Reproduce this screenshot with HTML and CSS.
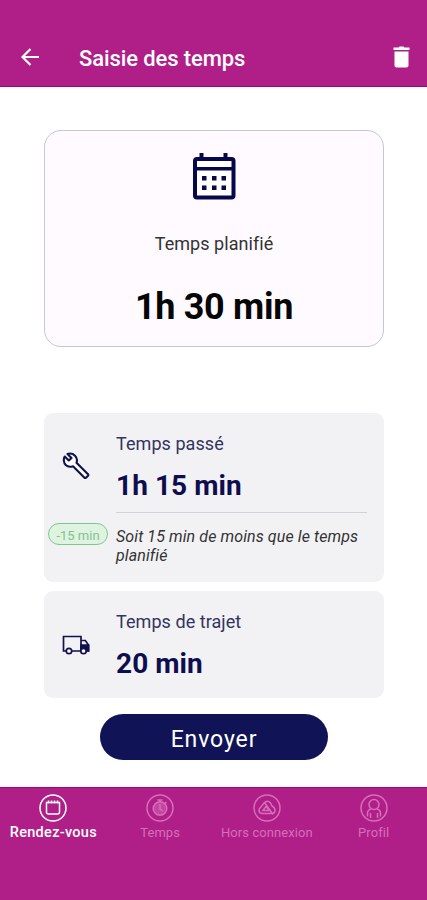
FILE: index.html
```
<!DOCTYPE html>
<html lang="fr">
<head>
    <title>Saisie des temps</title>
    <meta charset="UTF-8">
    <meta name="viewport" content="width=device-width, initial-scale=1">
    <link rel="stylesheet" href="styles.css">
</head>
<body>

    <header class="topbar">
        <svg class="back" width="20" height="20" viewBox="0 0 20 20"><path d="M19 10H3M10.500 2L2.500 10l8 8" fill="none" stroke="#fff" stroke-width="2.200"/></svg>
        <h1>Saisie des temps</h1>
        <svg class="trash" width="18" height="22" viewBox="0 0 18 22"><path d="M.5 1.500h5l1-1h4l1 1h5v2.500H.5zM1.500 5.500h14V19.500a2 2 0 0 1-2 2h-10a2 2 0 0 1-2-2z" fill="#fff"/></svg>
    </header>

    <main>
        <section class="planned">
            <svg width="44" height="48" viewBox="0 0 44 48" fill="#07074a">
                <rect x="3" y="7" width="38.500" height="38.500" rx="2" fill="#fff" stroke="#07074a" stroke-width="4"/>
                <path d="M7.500 1h4v6h-4zM31.500 1h4v6h-4zM3 15h38v3.500H3z"/>
                <path d="M10 24h4.500v4.500H10zM20 24h4.500v4.500H20zM29.500 24H34v4.500h-4.500zM10 33.500h4.500V38H10zM20 33.500h4.500V38H20zM29.500 33.500H34V38h-4.500z"/>
            </svg>
            <p class="planned-label">Temps planifié</p>
            <p class="planned-value">1h 30 min</p>
        </section>

        <section class="card spent">
            <div class="side">
                <svg class="wrench" width="28" height="28" viewBox="0 0 28 28"><path d="M2.700 4.500L6.800 8.500 9.500 6 5.500 2C8 1.200 11 1.700 13 3.700s2.400 4.600 1.500 7L26 22.200q.6.8 0 1.500L24 25.700q-.8.600-1.500 0L11 14.200c-2.400.9-5.300.7-7.300-1.200S1.200 7 2.700 4.500z" fill="#fff" stroke="#11114d" stroke-width="2.100" stroke-linejoin="round"/></svg>
                <span class="badge">-15 min</span>
            </div>
            <div class="info">
                <p class="label">Temps passé</p>
                <p class="value">1h 15 min</p>
                <p class="note">Soit 15 min de moins que le temps planifié</p>
            </div>
        </section>

        <section class="card travel">
            <div class="side">
                <svg class="truck" width="28" height="20" viewBox="0 0 28 20" fill="none" stroke="#11114d" stroke-width="1.700">
                    <path d="M4 16H1.500V1.500h17.500V16H10M19 5.500h4.300l3.200 4.500v6H25"/>
                    <path d="M19 10h7.500v6H19z" fill="#11114d"/>
                    <circle cx="7" cy="16" r="2.700" fill="#fff"/>
                    <circle cx="21.500" cy="16" r="2.700" fill="#fff"/>
                </svg>
            </div>
            <div class="info">
                <p class="label">Temps de trajet</p>
                <p class="value">20 min</p>
            </div>
        </section>

        <button class="send">Envoyer</button>
    </main>

    <nav class="tabs">
        <a class="tab active">
            <svg width="28" height="28" viewBox="0 0 28 28"><circle cx="14" cy="14" r="13"/><path d="M7.500 8.500h13V18q0 2-2 2h-9q-2 0-2-2zM9.500 6.500v3M12.500 6.500v3M15.500 6.500v3M18.500 6.500v3"/></svg>
            <span>Rendez-vous</span>
        </a>
        <a class="tab">
            <svg width="28" height="28" viewBox="0 0 28 28"><circle cx="14" cy="14" r="13"/><circle cx="14" cy="14.500" r="6.800" fill="currentColor" fill-opacity=".5"/><path d="M11.500 6h5M14 5.500V8M19 8l1.500 1.500M14 10v5l3 2"/></svg>
            <span>Temps</span>
        </a>
        <a class="tab">
            <svg width="28" height="28" viewBox="0 0 28 28"><circle cx="14" cy="14" r="13"/><path d="M11 9q3.500-3.500 6.500 0l1.500 3q3 1.500 3 4.500 0 2.500-2.500 3H9q-3-.5-3-3 0-2.500 2-3.500zM11.500 8.500L20 20.500M10 16.500l3-4 3.500 4z"/></svg>
            <span>Hors connexion</span>
        </a>
        <a class="tab">
            <svg width="28" height="28" viewBox="0 0 28 28"><circle cx="14" cy="14" r="13"/><circle cx="14" cy="10.500" r="5"/><path d="M7.500 22.500v-3q0-3.500 3.500-4.500M20.500 22.500v-3q0-3.500-3.500-4.500M10.500 19v5M17.500 19v5"/></svg>
            <span>Profil</span>
        </a>
    </nav>

</body>
</html>
```
FILE: styles.css
```
* {
    box-sizing: border-box;
}
body {
    font-family: Roboto, "Liberation Sans", sans-serif;
    background-color: #fff;
    margin: 0;
    height: 900px;
    display: flex;
    flex-direction: column;
}
h1, p {
    margin: 0;
}
svg {
    display: block;
    flex: none;
}
.topbar {
    height: 87px;
    padding: 31px 16px 0 20px;
    background: #b01e88;
    border-bottom: 1px solid #a00677;
    display: flex;
    align-items: center;
}
.topbar h1 {
    flex: 1;
    margin-left: 39px;
    color: #fff;
    font-size: 22px;
    line-height: 28px;
    font-weight: 500;
    letter-spacing: -0.1px;
}
.back, .trash {
    margin-bottom: 3px;
}
main {
    flex: 1;
    padding: 43px 43px 0 44px;
    display: flex;
    flex-direction: column;
}
.planned {
    height: 217px;
    padding-top: 21px;
    background: #fefaff;
    border: 1px solid #c5c6d6;
    border-radius: 17px;
    display: flex;
    flex-direction: column;
    align-items: center;
}
.planned-label {
    margin-top: 32px;
    font-size: 18px;
    line-height: 24px;
    letter-spacing: 0.05px;
    color: #333;
}
.planned-value {
    margin-top: 29px;
    font-size: 36px;
    line-height: 44px;
    font-weight: 700;
    letter-spacing: -0.3px;
    color: #050505;
}
.card {
    display: flex;
    background: #f2f2f5;
    border-radius: 9px;
}
.spent {
    height: 169px;
    margin-top: 66px;
}
.travel {
    height: 107px;
    margin-top: 9px;
}
.side {
    width: 72px;
    padding-left: 4px;
}
.wrench {
    margin: 39px 0 0 14px;
}
.truck {
    margin: 44px 0 0 14px;
}
.badge {
    display: block;
    width: 60px;
    height: 22px;
    margin-top: 43px;
    border: 1.500px solid #7fc792;
    border-radius: 11px;
    background: #def3e0;
    color: #83c293;
    font-size: 13px;
    line-height: 23px;
    text-align: center;
}
.info {
    flex: 1;
    padding: 19px 17px 0 0;
}
.label {
    font-size: 18px;
    line-height: 24px;
    letter-spacing: 0.06px;
    color: #34345f;
}
.value {
    margin-top: 13px;
    font-size: 28px;
    line-height: 34px;
    font-weight: 700;
    letter-spacing: 0.07px;
    color: #0e0e4e;
}
.note {
    margin-top: 9px;
    padding-top: 14px;
    border-top: 1px solid #d2d2da;
    font-size: 16px;
    line-height: 19px;
    letter-spacing: 0.1px;
    font-style: italic;
    color: #333;
}
.send {
    width: 228px;
    height: 46px;
    margin: 16px 0 0 56px;
    padding: 4px 0 0;
    border: none;
    border-radius: 23px;
    background: #101457;
    color: #fff;
    font-family: inherit;
    font-size: 23px;
    letter-spacing: 0.9px;
}
.tabs {
    height: 113px;
    padding-top: 6px;
    background: #b01e88;
    border-top: 1px solid #a00677;
    display: flex;
}
.tab {
    flex: 1 1 0;
    min-width: 0;
    display: flex;
    flex-direction: column;
    align-items: center;
    color: #d56fba;
    font-size: 13px;
    line-height: 16px;
    white-space: nowrap;
}
.tab svg {
    fill: none;
    stroke: currentColor;
    stroke-width: 1.500;
}
.tab span {
    margin-top: 3px;
    letter-spacing: 0.08px;
}
.tab.active {
    color: #fff;
    font-weight: 500;
}
.tab.active span {
    font-size: 14.500px;
    letter-spacing: 0.3px;
}
```
